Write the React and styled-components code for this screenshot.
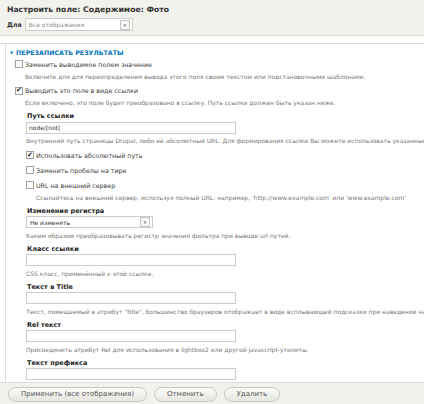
import styled, { createGlobalStyle } from "styled-components";

const GlobalStyle = createGlobalStyle`
    html, body{
        margin: 0;
        padding: 0;
        background: #ffffff;
        overflow: hidden;
    }
`;

const Page = styled.div`
    width: 424px;
    height: 404px;
    display: flex;
    flex-direction: column;
    font-family: 'DejaVu Sans', Verdana, sans-serif;
    color: #333333;
    overflow: hidden;
`;

const Header = styled.div`
    background-color: #f2f2ec;
    border-bottom: 1px solid #dcdcd8;
    padding: 4.5px 7px 0 7px;
    display: flex;
    flex-direction: column;
    gap: 3.5px;
    height: 36px;
    flex-shrink: 0;
    box-sizing: border-box;

    h1{
        margin: 0;
        font-size: 7.7px;
        font-weight: 700;
        color: #333333;
        line-height: 10px;
    }
`;

const ForRow = styled.div`
    display: flex;
    align-items: center;
    gap: 3px;

    b{
        font-size: 6.5px;
        color: #333333;
    }
`;

const Select = styled.div`
    width: ${props => props.width}px;
    height: ${props => props.h}px;
    flex-shrink: 0;
    box-sizing: border-box;
    border: 1px solid #cccccc;
    background: #ffffff;
    display: flex;
    align-items: center;
    justify-content: space-between;
    padding: 0 2px 0 3px;
    font-size: 6px;
    color: ${props => props.muted ? "#8a8a8a" : "#333333"};
    margin-top: ${props => props.mt || 0}px;
`;

const Arrow = styled.span`
    width: 8px;
    height: 8px;
    border: 1px solid #c4c4c4;
    display: flex;
    align-items: center;
    justify-content: center;
    font-size: 5px;
    color: #777777;
    background: #f6f6f6;
`;

const Gap = styled.div`
    height: 7px;
    flex-shrink: 0;
    border-bottom: 1px solid #dcdcd8;
`;

const Body = styled.div`
    flex: 1;
    min-height: 0;
    overflow: hidden;
    padding-left: 5px;
`;

const Fieldset = styled.div`
    border-left: 1px solid #dcdcd8;
    min-height: 100%;
    padding: 3.5px 0 0 4px;
    box-sizing: border-box;
    display: flex;
    flex-direction: column;
`;

const Legend = styled.div`
    color: #0074bd;
    font-weight: 700;
    font-size: 6.3px;
    display: flex;
    align-items: center;
    gap: 3px;
    height: 9px;
    line-height: 9px;

    span{
        font-size: 4px;
    }
`;

const Check = styled.label`
    display: flex;
    align-items: center;
    gap: 2px;
    font-size: 6.3px;
    color: #3a3a3a;
    height: 10px;
    flex-shrink: 0;
    margin-left: ${props => props.indent || 0}px;
    margin-top: ${props => props.mt || 0}px;
`;

const Box = styled.span`
    width: 8px;
    height: 8px;
    box-sizing: border-box;
    border: 1px solid #a0a0a0;
    background: #ffffff;
    display: flex;
    align-items: center;
    justify-content: center;
    font-size: 7px;
    line-height: 1;
    color: #222222;
`;

const Desc = styled.div`
    font-size: 6px;
    color: #777777;
    white-space: nowrap;
    height: 9px;
    line-height: 9px;
    flex-shrink: 0;
    margin: 2.5px 0 5px ${props => props.indent || 0}px;
`;

const Group = styled.div`
    margin-left: 16px;
    display: flex;
    flex-direction: column;
`;

const Label = styled.div`
    font-weight: 700;
    font-size: 6.5px;
    color: #222222;
    height: 9px;
    line-height: 9px;
    flex-shrink: 0;
    margin-left: 1px;
`;

const Input = styled.div`
    width: 210px;
    height: 12px;
    flex-shrink: 0;
    margin-top: 0.5px;
    box-sizing: border-box;
    border: 1px solid #cccccc;
    background: #ffffff;
    font-size: 6px;
    color: #333333;
    padding-left: 2px;
    display: flex;
    align-items: center;
`;

const Footer = styled.div`
    background-color: #f2f2ec;
    border-top: 1px solid #dcdcd8;
    height: 22px;
    flex-shrink: 0;
    box-sizing: border-box;
    display: flex;
    align-items: center;
    gap: 7px;
    padding: 1px 8px 0 8px;
`;

const Button = styled.button`
    height: 15px;
    padding: 0 12px;
    border: 1px solid #c8c8c0;
    border-radius: 8px;
    background: linear-gradient(#fbfbf9, #e6e6e0);
    font-family: 'DejaVu Sans', Verdana, sans-serif;
    font-size: 7px;
    color: #555555;
    white-space: nowrap;
`;

const Tick = ({checked}) => <Box>{checked ? "✔" : ""}</Box>;

function Field({label, value, desc}) {
    return (
        <>
            <Label>{label}</Label>
            <Input>{value}</Input>
            <Desc>{desc}</Desc>
        </>
    );
}

export default function App() {
    return (
        <Page>
            <GlobalStyle />
            <Header>
                <h1>Настроить поле: Содержимое: Фото</h1>
                <ForRow>
                    <b>Для</b>
                    <Select width={108} h={13} muted>Все отображения<Arrow>▾</Arrow></Select>
                </ForRow>
            </Header>
            <Gap />
            <Body>
                <Fieldset>
                    <Legend><span>▼</span>ПЕРЕЗАПИСАТЬ РЕЗУЛЬТАТЫ</Legend>
                    <Check indent={5} mt={2.5}><Tick />Заменить выводимое полем значение</Check>
                    <Desc indent={15}>Включите для для переопределения вывода этого поля своим текстом или подстановочными шаблонами.</Desc>
                    <Check indent={5}><Tick checked />Выводить это поле в виде ссылки</Check>
                    <Desc indent={15}>Если включено, это поле будет преобразовано в ссылку. Путь ссылки должен быть указан ниже.</Desc>
                    <Group>
                        <Field label="Путь ссылки" value="node/[nid]" desc="Внутренний путь страницы Drupal, либо её абсолютный URL. Для формирования ссылки Вы можете использовать указанные выше шаблоны." />
                        <Check><Tick checked />Использовать абсолютный путь</Check>
                        <Check mt={5}><Tick />Заменить пробелы на тире</Check>
                        <Check mt={5}><Tick />URL на внешний сервер</Check>
                        <Desc indent={10}>Ссылайтесь на внешний сервер, используя полный URL: например, 'http://www.example.com' или 'www.example.com'</Desc>
                        <Label>Изменение регистра</Label>
                        <Select width={127} h={12} mt={0.5}>Не изменять<Arrow>▾</Arrow></Select>
                        <Desc>Каким образом преобразовывать регистр значения фильтра при выводе url путей.</Desc>
                        <Field label="Класс ссылки" desc="CSS класс, применённый к этой ссылке." />
                        <Field label="Текст в Title" desc={'Текст, помещаемый в атрибут "title", большинство браузеров отображает в виде всплывающей подсказки при наведении на ссылку.'} />
                        <Field label="Rel текст" desc="Присоединить атрибут Rel для использования в lightbox2 или другой javascript-утилиты." />
                        <Field label="Текст префикса" desc="Любой текст, добавляемый перед ссылкой. Можно использовать HTML." />
                    </Group>
                </Fieldset>
            </Body>
            <Footer>
                <Button>Применить (все отображения)</Button>
                <Button>Отменить</Button>
                <Button>Удалить</Button>
            </Footer>
        </Page>
    );
}
